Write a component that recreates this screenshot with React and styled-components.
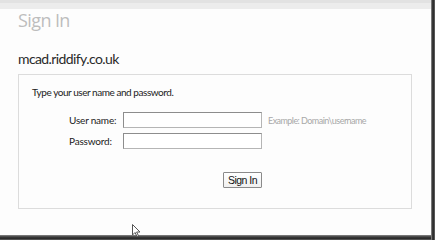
import React from "react";
import styled, { createGlobalStyle } from "styled-components";

const Global = createGlobalStyle`
  html, body { margin: 0; padding: 0; background: #ffffff; }
  body { font-family: "Lato", "Open Sans", sans-serif; }
`;

const Shot = styled.div`
  position: relative;
  width: 435px;
  height: 240px;
  display: grid;
  grid-template-columns: 431px 4px;
  grid-template-rows: 235px 5px;
  overflow: hidden;
`;

const RightShadow = styled.div`
  grid-column: 2;
  grid-row: 1 / span 2;
  background: linear-gradient(to right, #9a9a9a 0%, #3a3a3a 35%, #2a2a2a 60%, #6a6a6a 100%);
`;

const BottomShadow = styled.div`
  grid-column: 1;
  grid-row: 2;
  background: linear-gradient(to bottom, #8a8a8a 0%, #3a3a3a 40%, #2c2c2c 70%, #666 100%);
`;

const Page = styled.div`
  grid-column: 1;
  grid-row: 1;
  background: #fdfdfd;
  display: flex;
  flex-direction: column;
`;

const TopBar = styled.div`
  height: 6px;
  border-top: 3px solid #e2e2e2;
  background: #ececec;
`;

const Content = styled.div`
  padding: 0 19px 0 18px;
  display: flex;
  flex-direction: column;
`;

const Title = styled.h1`
  margin: 0;
  font-family: "Open Sans", sans-serif;
  font-weight: 400;
  font-size: 18px;
  line-height: 22px;
  color: #bdbdbd;
  letter-spacing: -0.6px;
`;

const Site = styled.div`
  margin-top: 19px;
  font-family: "Lato", sans-serif;
  font-size: 14px;
  line-height: 18px;
  color: #2a2a2a;
  letter-spacing: -0.6px;
`;

const Box = styled.div`
  box-sizing: border-box;
  margin-top: 6px;
  height: 135px;
  border: 1px solid #dcdcdc;
  padding: 10px 13px 0 13px;
  display: flex;
  flex-direction: column;
`;

const Text = styled.span`
  font-family: "Lato", sans-serif;
  font-size: 10px;
  color: #222;
  letter-spacing: -0.45px;
`;

const Intro = styled(Text)`
  display: block;
  line-height: 14px;
`;

const Form = styled.div`
  margin: 13px 0 0 37px;
  display: grid;
  grid-template-columns: 54px 139px auto;
  grid-template-rows: 16px 16px auto;
  row-gap: 5px;
  column-gap: 0;
  align-items: center;
`;

const Label = styled(Text).attrs({ as: "label" })`
  grid-column: 1;
  letter-spacing: -0.2px;
`;

const Input = styled.div`
  grid-column: 2;
  box-sizing: border-box;
  height: 16px;
  border: 1px solid #8d8d8d;
  border-right-color: #b5b5b5;
  border-bottom-color: #b5b5b5;
  background: #fff;
`;

const Hint = styled.span`
  grid-column: 3;
  margin-left: 6px;
  font-family: "Lato", sans-serif;
  font-size: 9px;
  color: #a8a8a8;
  letter-spacing: -0.55px;
  white-space: nowrap;
`;

const ButtonRow = styled.div`
  grid-column: 2;
  grid-row: 3;
  align-self: start;
  display: flex;
  justify-content: flex-end;
  margin-top: 18px;
`;

const Button = styled.button`
  box-sizing: border-box;
  height: 16px;
  width: 39px;
  padding: 0;
  font-family: "Liberation Sans", Arial, sans-serif;
  font-size: 10.5px;
  letter-spacing: -0.5px;
  color: #111;
  background: linear-gradient(#ffffff, #f0f0f0);
  border: 1px solid #8a8a8a;
  border-radius: 1px;
`;

const Cursor = styled.svg`
  position: absolute;
  left: 132px;
  top: 224px;
`;

export default function App() {
  return (
    <>
      <Global />
      <Shot>
        <Page>
          <TopBar />
          <Content>
            <Title>Sign In</Title>
            <Site>mcad.riddify.co.uk</Site>
            <Box>
              <Intro>Type your user name and password.</Intro>
              <Form>
                <Label>User name:</Label>
                <Input />
                <Hint>Example: Domain\username</Hint>
                <Label>Password:</Label>
                <Input />
                <ButtonRow>
                  <Button>Sign In</Button>
                </ButtonRow>
              </Form>
            </Box>
          </Content>
        </Page>
        <RightShadow />
        <BottomShadow />
        <Cursor width="10" height="14" viewBox="0 0 10 14">
          <path d="M0.5 0.5 L0.5 11 L3 8.5 L5 12.5 L6.5 11.8 L4.6 8 L8 8 Z" fill="#fff" stroke="#555" strokeWidth="1" />
        </Cursor>
      </Shot>
    </>
  );
}
